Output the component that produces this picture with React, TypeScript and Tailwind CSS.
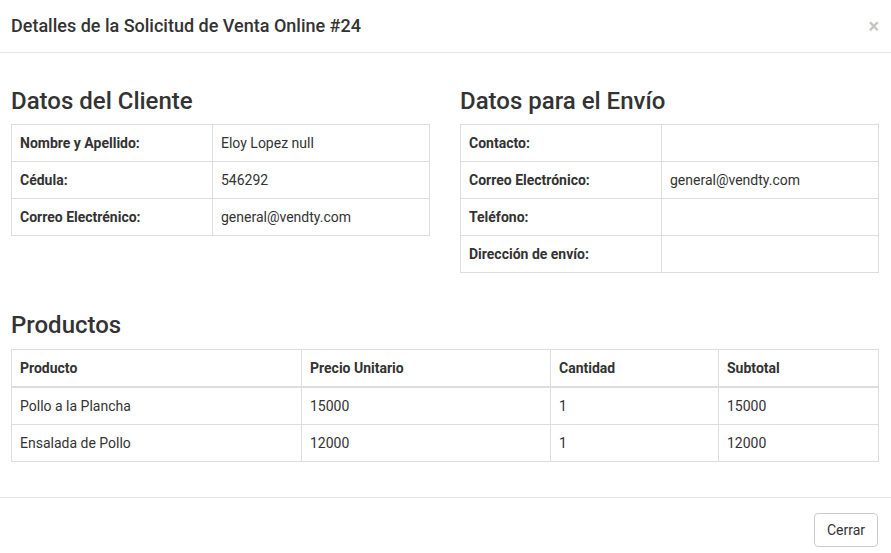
import React from "react";

const font = { fontFamily: "Roboto, 'Liberation Sans', Arial, sans-serif" };

function KV({ rows }: { rows: [string, string][] }) {
  return (
    <table className="w-full border-collapse border border-[#dddddd] text-[14px] text-[#333333] mb-[20px]">
      <tbody>
        {rows.map(([k, v]) => (
          <tr key={k}>
            <td className="w-[201px] border border-[#dddddd] px-[8px] py-[8px] leading-[20px] font-bold">{k}</td>
            <td className="border border-[#dddddd] px-[8px] py-[8px] leading-[20px]">{v}</td>
          </tr>
        ))}
      </tbody>
    </table>
  );
}

export default function App() {
  const products = [
    ["Pollo a la Plancha", "15000", "1", "15000"],
    ["Ensalada de Pollo", "12000", "1", "12000"],
  ];
  return (
    <div className="w-[891px] min-h-[553px] bg-white text-[#333333]" style={font}>
      <div className="flex items-start justify-between pl-[11px] pr-[12px] py-[15px] border-b border-[#e5e5e5]">
        <h4 className="text-[18px] leading-[22px] font-medium text-[#333333]">Detalles de la Solicitud de Venta Online #24</h4>
        <span className="text-[20px] leading-[18px] font-bold text-[#c4c4c4] mt-[2px]">×</span>
      </div>
      <div className="pl-[11px] pr-[12px] pt-[15px] pb-[15px]">
        <div className="grid grid-cols-2 gap-[30px]">
          <div>
            <h3 className="mt-[20px] mb-[10px] text-[24px] leading-[26.4px] font-medium">Datos del Cliente</h3>
            <KV
              rows={[
                ["Nombre y Apellido:", "Eloy Lopez null"],
                ["Cédula:", "546292"],
                ["Correo Electrénico:", "general@vendty.com"],
              ]}
            />
          </div>
          <div>
            <h3 className="mt-[20px] mb-[10px] text-[24px] leading-[26.4px] font-medium">Datos para el Envío</h3>
            <KV
              rows={[
                ["Contacto:", ""],
                ["Correo Electrónico:", "general@vendty.com"],
                ["Teléfono:", ""],
                ["Dirección de envío:", ""],
              ]}
            />
          </div>
        </div>
        <h3 className="mt-[19px] mb-[10px] text-[24px] leading-[26.4px] font-medium">Productos</h3>
        <table className="w-full border-collapse border border-[#dddddd] text-[14px] mb-[20px]">
          <thead>
            <tr>
              <th className="w-[290px] border border-[#dddddd] border-b-2 px-[8px] py-[8px] leading-[20px] font-bold text-left">Producto</th>
              <th className="w-[249px] border border-[#dddddd] border-b-2 px-[8px] py-[8px] leading-[20px] font-bold text-left">Precio Unitario</th>
              <th className="w-[168px] border border-[#dddddd] border-b-2 px-[8px] py-[8px] leading-[20px] font-bold text-left">Cantidad</th>
              <th className="border border-[#dddddd] border-b-2 px-[8px] py-[8px] leading-[20px] font-bold text-left">Subtotal</th>
            </tr>
          </thead>
          <tbody>
            {products.map((p) => (
              <tr key={p[0]}>
                {p.map((c, i) => (
                  <td key={i} className="border border-[#dddddd] px-[8px] py-[8px] leading-[20px]">{c}</td>
                ))}
              </tr>
            ))}
          </tbody>
        </table>
      </div>
      <div className="flex justify-end border-t border-[#e5e5e5] pt-[15px] pb-[15px] pr-[13px]">
        <button className="border border-[#cccccc] rounded-[4px] px-[12px] py-[6px] text-[14px] leading-[20px] text-[#333333] bg-white">Cerrar</button>
      </div>
    </div>
  );
}
